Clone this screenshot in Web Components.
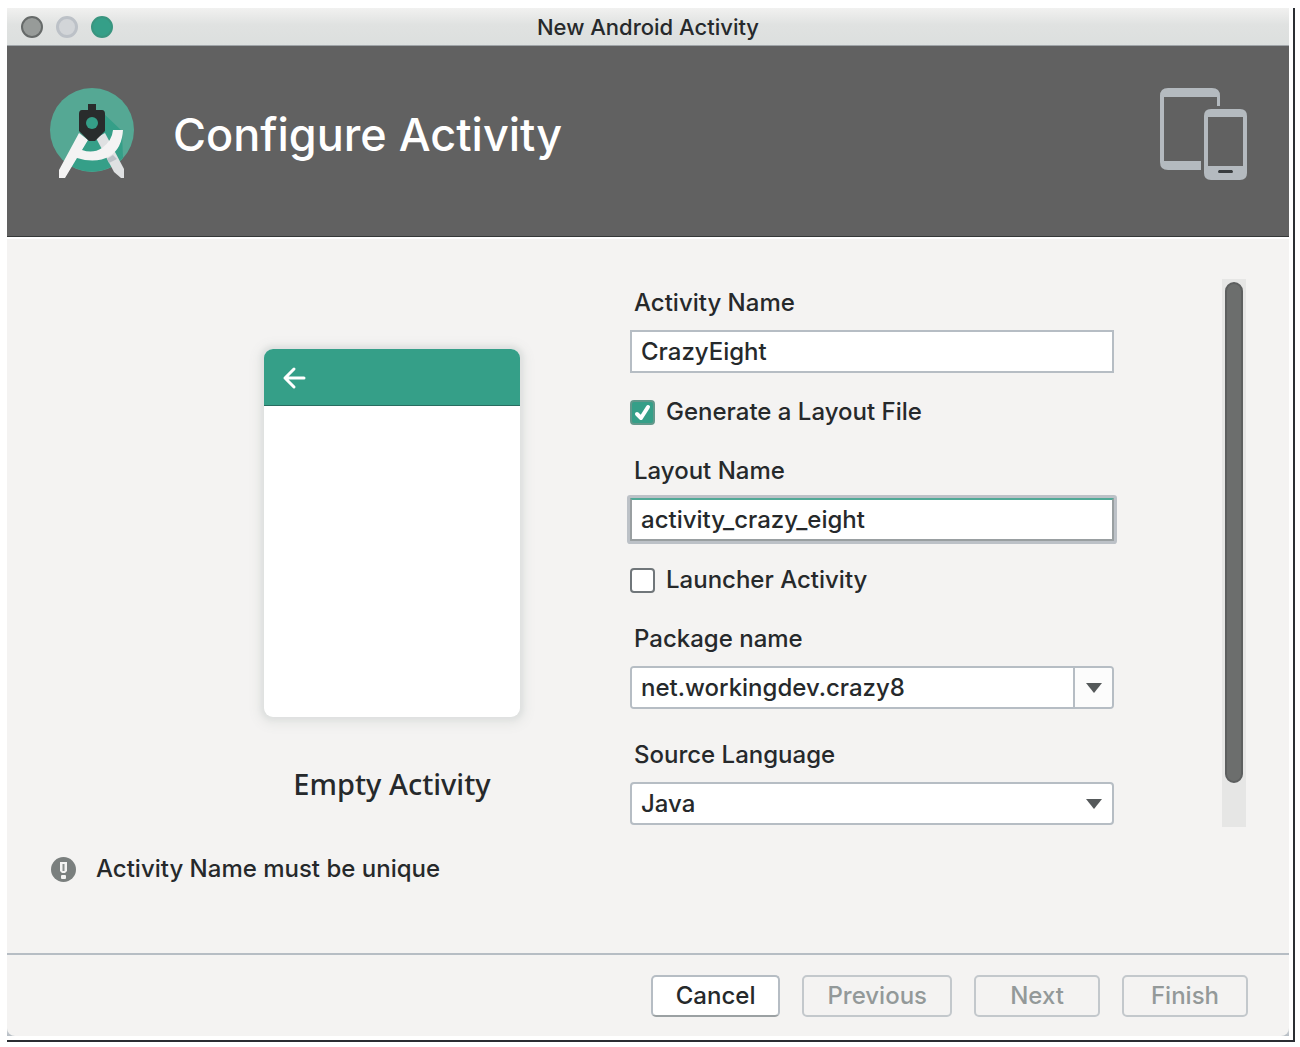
<!DOCTYPE html>
<html lang="en">
<head>
<meta charset="utf-8">
<meta name="viewport" content="width=device-width, initial-scale=1">
<title>New Android Activity</title>
<style>
  html { background: #fff; }
  body {
    margin: 0;
    --ink: #26292b;
    --accent: #359f88;
    --line: #b6bdc4;
    --panel: #f4f3f2;
    --font: Inter, "Liberation Sans", sans-serif;
    font: 500 24px/28px var(--font);
    color: var(--ink);
  }
</style>
</head>
<body>
<wizard-window>
  <title-bar slot="title">New Android Activity</title-bar>
  <wizard-header slot="header">Configure Activity</wizard-header>
  <activity-preview slot="preview">Empty Activity</activity-preview>
  <wizard-form slot="form">
    <text-field label="Activity Name" value="CrazyEight"></text-field>
    <check-field label="Generate a Layout File" checked></check-field>
    <text-field label="Layout Name" value="activity_crazy_eight" active></text-field>
    <check-field label="Launcher Activity"></check-field>
    <combo-field label="Package name" value="net.workingdev.crazy8"></combo-field>
    <select-field label="Source Language" options="Java,Kotlin"></select-field>
  </wizard-form>
  <scroll-track slot="scroll"></scroll-track>
  <status-line slot="status">Activity Name must be unique</status-line>
  <wizard-footer slot="footer">
    <wizard-button enabled>Cancel</wizard-button>
    <wizard-button>Previous</wizard-button>
    <wizard-button>Next</wizard-button>
    <wizard-button>Finish</wizard-button>
  </wizard-footer>
</wizard-window>

<script>
const base = ':host,*{box-sizing:border-box}';
function define(name, render) {
  customElements.define(name, class extends HTMLElement {
    connectedCallback() {
      if (this.shadowRoot) return;
      this.attachShadow({ mode: 'open' }).innerHTML = render(this);
    }
  });
}

define('wizard-window', () => `
<style>${base}
:host{display:block;padding:8px 5px 5px 7px}
.frame{border-right:2px solid #2b2e33;border-bottom:2px solid #2b2e33;padding:0 4px 4px 0}
.window{background:var(--panel);border-radius:0 0 8px 8px;overflow:hidden}
.body{display:grid;grid-template-columns:623fr 484fr 175fr;border-top:2px solid #fff}
.status{padding:28px 44px 70px}
.corners{background:linear-gradient(#fff,var(--line));background-size:100% 20px;background-position:bottom;background-repeat:no-repeat}
</style>
<div class="frame"><div class="corners"><div class="window">
  <slot name="title"></slot>
  <slot name="header"></slot>
  <main>
    <div class="body"><slot name="preview"></slot><slot name="form"></slot><slot name="scroll"></slot></div>
    <div class="status"><slot name="status"></slot></div>
  </main>
  <slot name="footer"></slot>
</div></div></div>`);

define('title-bar', () => `
<style>${base}
:host{display:grid;grid-template-columns:1fr auto 1fr;align-items:center;height:38px;padding:0 14px;background:linear-gradient(#f1f1f0,#e0e2e1 45%,#dcdfde);border-bottom:1px solid #9fa4a8}
.lights{display:flex;gap:13px}
.lights i{width:22px;height:22px;border-radius:50%;border:2px solid #666a69;background:#979b99}
.lights i:nth-child(2){border:3px solid #bcc1c7;background:#d2d5d8}
.lights i:nth-child(3){border-color:#39957f;background:var(--accent)}
h1{font-size:22px;line-height:28px;font-weight:500;margin:0}
</style>
<div class="lights"><i></i><i></i><i></i></div><h1><slot></slot></h1>`);

define('wizard-header', () => `
<style>${base}
:host{display:flex;align-items:flex-start;height:191px;padding:42px 42px 0 43px;background:#616161;border-bottom:1px solid #353838}
.logo{width:84px;height:94px;flex:none}
h2{margin:20px auto 0 39px;font:500 45px/54px var(--font);color:#fff}
.devices{width:88px;height:94px;flex:none}
</style>
<svg class="logo" viewBox="0 0 84 94" aria-hidden="true">
  <circle cx="42" cy="42" r="42" fill="#55a894"/>
  <path d="M42 43L52 24L72 43L73 70A42 42 0 0 1 18 76Z" fill="#359f88"/>
  <path d="M46 50L55 45L74 81V90L71 90L64 84Z" fill="#dfe1e2"/>
  <path d="M63 67L57 71L59 75L67 71Z" fill="#bcc1c7"/>
  <path d="M29 45L38 52L32 62Q43 66 52 60Q62 53 63 42H73Q72 60 60 68Q46 76 27 70L15 90H9V82Z" fill="#f4f3f3"/>
  <path d="M38 16H46V22H52Q55 22 55 26V43L45 53H39L29 43V26Q29 22 32 22H38Z" fill="#292c2c"/>
  <circle cx="42" cy="35" r="6" fill="#359f88"/>
</svg>
<h2><slot></slot></h2>
<svg class="devices" viewBox="0 0 88 94" aria-hidden="true">
  <path fill="#b4babf" d="M9 0H53Q61 0 61 8V18H58V9H5V73H42V82H9Q1 82 1 74V8Q1 0 9 0Z"/>
  <path fill="#b4babf" fill-rule="evenodd" d="M52 21H81Q88 21 88 28V85Q88 92 81 92H52Q45 92 45 85V28Q45 21 52 21ZM49 29V78H84V29Z"/>
  <path d="M60 82H73Q75 84 73 85H60Q58 84 60 82Z" fill="#393d3f"/>
</svg>`);

define('activity-preview', () => `
<style>${base}
:host{display:flex;flex-direction:column;align-items:center;padding:110px 0 0 147px}
.card{width:256px;height:368px;background:#fff;border-radius:9px;overflow:hidden;box-shadow:0 0 4px 3px #dfe1e0,0 2px 12px 5px #e5e6e4}
.bar{height:57px;background:var(--accent);border-bottom:1px solid #286c60;padding:17px 18px}
svg{display:block;width:24px;height:24px}
p{margin:49px 0 0;font:500 29px/36px "Noto Sans","Open Sans",sans-serif}
</style>
<div class="card"><div class="bar"><svg viewBox="0 0 24 24" fill="none" stroke="#fff" stroke-width="3" stroke-linecap="round" stroke-linejoin="round" aria-hidden="true"><path d="M22 12H3M12 3L3 12L12 21"/></svg></div></div>
<p><slot></slot></p>`);

define('wizard-form', () => `
<style>${base}
:host{display:block;padding-top:50px}
form{display:flex;flex-direction:column;gap:32px}
::slotted(check-field){margin-top:-6px}
</style><form><slot></slot></form>`);

const fieldCss = `${base}
:host{display:block}
label{display:block;padding-left:4px;margin-bottom:13px}
.control{display:block;width:100%;height:43px;padding:0 9px;font:inherit;color:inherit;background:#fff;border:2px solid var(--line);border-radius:0;outline:0}`;

define('text-field', el => `
<style>${fieldCss}
:host([active]) .control{border:2px solid #999fa1;border-top-color:#51a997;box-shadow:0 0 0 3px #bcc1c7;border-radius:1px}
</style>
<label for="c">${el.getAttribute('label')}</label>
<input class="control" id="c" type="text" value="${el.getAttribute('value')}">`);

define('combo-field', el => `
<style>${fieldCss}
.combo{display:flex;height:43px;border:2px solid var(--line);border-radius:4px;background:#fff;overflow:hidden}
.combo .control{flex:1;min-width:0;height:100%;border:0}
button{width:39px;border:0;border-left:2px solid var(--line);background:#fcfcfc;padding:0;display:grid;place-items:center}
svg{width:16px;height:10px}
</style>
<label for="c">${el.getAttribute('label')}</label>
<div class="combo"><input class="control" id="c" type="text" value="${el.getAttribute('value')}">
<button type="button" aria-label="Show packages"><svg viewBox="0 0 16 10"><path d="M0 0H16L8 10Z" fill="#55595a"/></svg></button></div>`);

define('select-field', el => `
<style>${fieldCss}
.wrap{display:grid;align-items:center}
.wrap>*{grid-area:1/1}
.control{appearance:none;border-radius:4px}
svg{width:16px;height:10px;justify-self:end;margin-right:12px;pointer-events:none}
</style>
<label for="c">${el.getAttribute('label')}</label>
<div class="wrap"><select class="control" id="c">${el.getAttribute('options').split(',').map(o => `<option>${o}</option>`).join('')}</select>
<svg viewBox="0 0 16 10" aria-hidden="true"><path d="M0 0H16L8 10Z" fill="#55595a"/></svg></div>`);

define('check-field', el => `
<style>${base}
:host{display:block}
label{display:flex;align-items:center;gap:11px;height:26px}
.box{display:grid;width:25px;height:25px;flex:none}
.box>*{grid-area:1/1}
input{appearance:none;margin:0;width:25px;height:25px;border:2px solid #70767a;border-radius:4px;background:#fff}
input:checked{background:var(--accent);border-color:#62988b}
svg{width:25px;height:25px;visibility:hidden;pointer-events:none}
input:checked+svg{visibility:visible}
</style>
<label><span class="box"><input type="checkbox" ${el.hasAttribute('checked') ? 'checked' : ''}><svg viewBox="0 0 25 25" fill="none" stroke="#fff" stroke-width="4" stroke-linecap="round" stroke-linejoin="round" aria-hidden="true"><path d="M7 14L11 18L18 7"/></svg></span>${el.getAttribute('label')}</label>`);

define('scroll-track', () => `
<style>${base}
:host{display:flex;justify-content:flex-end;align-items:flex-start;padding:40px 43px 0 0}
.track{width:24px;height:548px;background:#e6e6e5;padding:3px}
.thumb{height:501px;border-radius:9px;background:#6c6e6d;border:2px solid #5d5f5f}
</style><div class="track"><div class="thumb"></div></div>`);

define('status-line', () => `
<style>${base}
:host{display:flex;align-items:center;gap:20px}
svg{width:25px;height:25px;flex:none}
</style>
<svg viewBox="0 0 25 25" aria-hidden="true"><circle cx="12.5" cy="12.5" r="12.5" fill="#7a7f7e"/><path d="M9 5H16V14L14 16H11L9 14Z" fill="#f4f3f2"/><path d="M12.5 7V14" stroke="#8b908f" stroke-width="2"/><rect x="10" y="18" width="5" height="4" rx="1" fill="#f4f3f2"/></svg>
<span><slot></slot></span>`);

define('wizard-footer', () => `
<style>${base}
:host{display:block;border-top:2px solid var(--line)}
footer{display:flex;justify-content:flex-end;gap:22px;padding:20px 41px 19px}
</style><footer><slot></slot></footer>`);

define('wizard-button', el => `
<style>${base}
:host{display:block}
button{display:block;height:42px;min-width:126px;padding:0 23px;border:2px solid #c3c8cc;border-radius:5px;background:transparent;font:inherit;color:#939999}
:host([enabled]) button{background:#fff;color:var(--ink);border-color:var(--line);border-bottom-color:#9ba1a3}
</style><button type="button" ${el.hasAttribute('enabled') ? '' : 'disabled'}><slot></slot></button>`);
</script>
</body>
</html>
